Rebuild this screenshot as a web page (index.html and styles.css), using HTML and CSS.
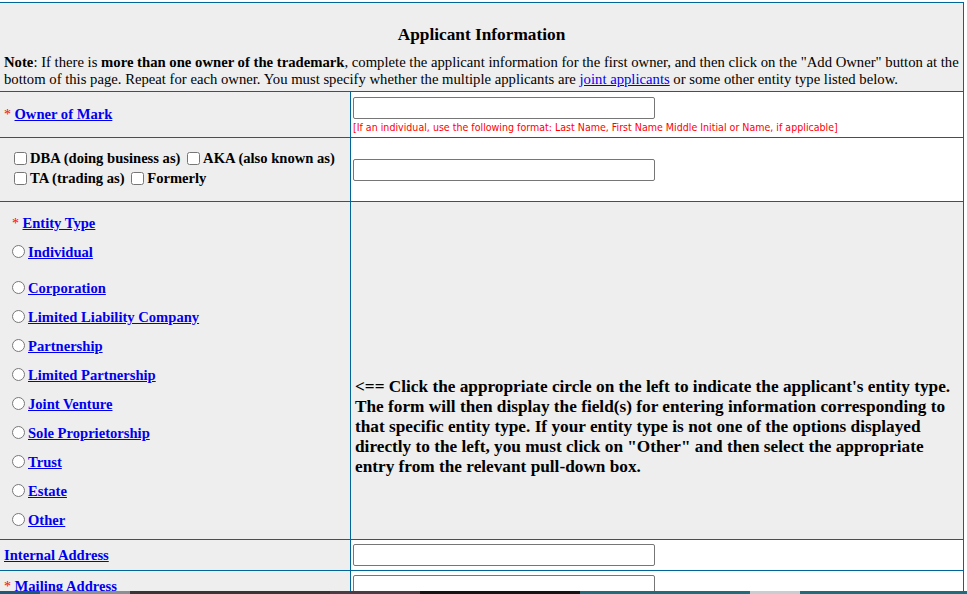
FILE: index.html
```html
<!DOCTYPE html>
<html>
<head>
<meta charset="utf-8">
<title>Applicant Information</title>
<link rel="stylesheet" href="styles.css">
</head>
<body>
<table class="form">
  <colgroup><col class="c-left"><col class="c-right"></colgroup>
  <tr>
    <td colspan="2" class="head">
      <h1 class="title">Applicant Information</h1>
      <p class="note"><b>Note</b>: If there is <b>more than one owner of the trademark</b>, complete the applicant information for the first owner, and then click on the "Add Owner" button at the bottom of this page. Repeat for each owner. You must specify whether the multiple applicants are <a class="plain" href="#">joint applicants</a> or some other entity type listed below.</p>
    </td>
  </tr>
  <tr class="r-owner">
    <td class="lbl"><span class="req">*</span> <a class="lnk" href="#">Owner of Mark</a></td>
    <td class="val">
      <input class="txt" type="text">
      <div class="hint">[If an individual, use the following format: Last Name, First Name Middle Initial or Name, if applicable]</div>
    </td>
  </tr>
  <tr class="r-dba">
    <td class="lbl dba">
      <div class="dba-line"><input type="checkbox"><b>DBA (doing business as)</b> <input type="checkbox"><b>AKA (also known as)</b></div>
      <div class="dba-line"><input type="checkbox"><b>TA (trading as)</b> <input type="checkbox"><b>Formerly</b></div>
    </td>
    <td class="val"><input class="txt" type="text"></td>
  </tr>
  <tr class="r-entity">
    <td class="lbl entity">
      <div class="ent-title"><span class="req">*</span> <a class="lnk" href="#">Entity Type</a></div>
      <div class="opt first"><input type="radio" name="et"><a class="lnk" href="#">Individual</a></div>
      <div class="opt"><input type="radio" name="et"><a class="lnk" href="#">Corporation</a></div>
      <div class="opt"><input type="radio" name="et"><a class="lnk" href="#">Limited Liability Company</a></div>
      <div class="opt"><input type="radio" name="et"><a class="lnk" href="#">Partnership</a></div>
      <div class="opt"><input type="radio" name="et"><a class="lnk" href="#">Limited Partnership</a></div>
      <div class="opt"><input type="radio" name="et"><a class="lnk" href="#">Joint Venture</a></div>
      <div class="opt"><input type="radio" name="et"><a class="lnk" href="#">Sole Proprietorship</a></div>
      <div class="opt"><input type="radio" name="et"><a class="lnk" href="#">Trust</a></div>
      <div class="opt"><input type="radio" name="et"><a class="lnk" href="#">Estate</a></div>
      <div class="opt"><input type="radio" name="et"><a class="lnk" href="#">Other</a></div>
    </td>
    <td class="val ent-help">&lt;== Click the appropriate circle on the left to indicate the applicant's entity type. The form will then display the field(s) for entering information corresponding to that specific entity type. If your entity type is not one of the options displayed directly to the left, you must click on "Other" and then select the appropriate entry from the relevant pull-down box.</td>
  </tr>
  <tr class="r-short">
    <td class="lbl"><a class="lnk" href="#">Internal Address</a></td>
    <td class="val"><input class="txt" type="text"></td>
  </tr>
  <tr class="r-short">
    <td class="lbl"><span class="req">*</span> <a class="lnk" href="#">Mailing Address</a></td>
    <td class="val"><input class="txt" type="text"></td>
  </tr>
</table>
<div class="taskbar"></div>
</body>
</html>
```

FILE: styles.css
```css
html, body {
  margin: 0;
  padding: 0;
  background: #fff;
  overflow: hidden;
}
body {
  font-family: "Liberation Serif", "Times New Roman", serif;
  font-size: 14px;
  color: #000;
}
.form {
  border-collapse: collapse;
  table-layout: fixed;
  width: 964px;
  margin: 2px 0 0 -1px;
}
.c-left { width: 351px; }
.c-right { width: 613px; }
.form td {
  border: 1px solid #006699;
  padding: 3px;
}
.form td.head {
  background: #eeeeee;
  padding: 3px 4px 3px 4px;
}
.title {
  margin: 19px 0 9px;
  font-size: 17.3px;
  line-height: 20px;
  text-align: center;
  font-weight: bold;
}
.note {
  margin: 0;
  font-size: 14.7px;
  line-height: 17px;
}
a { color: #0000ee; }
.plain { font-weight: normal; }
.lnk { font-weight: bold; font-size: 14.6px; }
.req { color: #ff0000; }
.form td.lbl {
  background: #eeeeee;
  vertical-align: middle;
  padding-left: 4px;
}
.form td.val {
  background: #fff;
  vertical-align: middle;
  padding-left: 2px;
}
.txt {
  box-sizing: border-box;
  width: 302px;
  height: 22px;
  border: 1px solid #767676;
  border-radius: 2px;
  margin: 0;
  padding: 1px 2px;
  background: #fff;
  display: block;
}
.form .r-owner td.val { padding-top: 5px; padding-bottom: 3px; }
.hint {
  font-family: "DejaVu Sans Condensed", "DejaVu Sans", sans-serif;
  font-size: 10.57px;
  line-height: 14px;
  color: #ff0000;
  margin-top: 1px;
}
.form td.dba { padding: 10px 3px 13px 11px; }
.dba-line {
  font-size: 14.6px;
  line-height: 20px;
  white-space: nowrap;
}
.dba-line input { margin: 3px 3px 3px 3px; vertical-align: -2px; }
.form td.entity {
  vertical-align: top;
  padding: 7px 3px 4px 9px;
}
.ent-title { line-height: 29px; padding-left: 3px; }
.opt { line-height: 29px; }
.opt.first { margin-bottom: 7px; }
.opt input { margin: 0 3px 0 3px; vertical-align: -1px; }
.form td.ent-help {
  background: #eeeeee;
  vertical-align: top;
  padding: 175px 2px 3px 4px;
  font-weight: bold;
  font-size: 17.25px;
  line-height: 20px;
}
.form .r-short td.val { padding-top: 4px; padding-bottom: 4px; }
.taskbar {
  position: fixed;
  left: 0;
  right: 0;
  bottom: 0;
  height: 3px;
  background: linear-gradient(to right, #1d5a78 0, #1d5a78 40px, #8a8f94 40px, #8a8f94 130px, #3a3436 130px, #3a3436 330px, #4a3c42 330px, #4a3c42 420px, #141414 420px, #141414 580px, #1f6c7c 580px, #1f6c7c 750px, #c9cdd0 750px, #c9cdd0 800px, #1f6c7c 800px);
}
```
